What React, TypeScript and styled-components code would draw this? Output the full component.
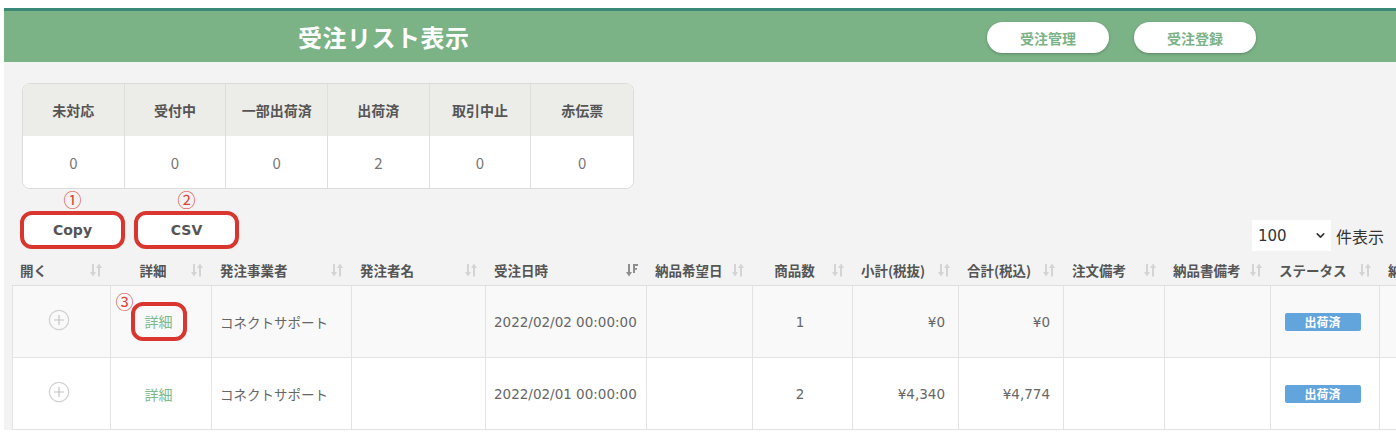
import React from "react";
import styled, { createGlobalStyle } from "styled-components";
import { ChevronDown } from "lucide-react";

const JP = `"Noto Sans CJK JP", sans-serif`;
const MIX = `"DejaVu Sans", "Noto Sans CJK JP", sans-serif`;

const GlobalStyle = createGlobalStyle`
  html, body { margin: 0; padding: 0; background: #fff; }
  body { font-family: ${MIX}; }
  * { box-sizing: border-box; }
`;

const Page = styled.div`
  margin: 8px 0 0 4px;
  height: 422px;
  background: #f2f3f2;
  overflow: hidden;
`;

const TopBar = styled.header`
  height: 54px;
  border-top: 3px solid #3d8979;
  background: #7bb387;
  display: flex;
  align-items: center;
  padding: 0 140px 0 294px;
`;

const Title = styled.h1`
  margin: 0;
  font-family: ${JP};
  font-weight: 700;
  font-size: 24px;
  line-height: 1;
  color: #fff;
  letter-spacing: 0.5px;
`;

const NavButtons = styled.nav`
  margin-left: auto;
  display: flex;
  gap: 25px;
  padding-top: 2px;
`;

const NavButton = styled.button`
  width: 122px;
  height: 31px;
  border: none;
  border-radius: 16px;
  background: #fff;
  color: #7bb387;
  font-family: ${JP};
  font-weight: 700;
  font-size: 14px;
  box-shadow: 0 1px 3px rgba(0, 0, 0, 0.25);
`;

const Main = styled.main`
  padding: 21px 0 0 8px;
`;

const SummaryCard = styled.div`
  margin-left: 10px;
  width: 612px;
  border: 1px solid #dcdcda;
  border-radius: 8px;
  overflow: hidden;
  background: #fff;
  display: grid;
  grid-template-columns: repeat(6, 1fr);
`;

const SummaryCell = styled.div<{ $head?: boolean; $last?: boolean }>`
  height: 52px;
  display: flex;
  align-items: center;
  justify-content: center;
  font-family: ${JP};
  border-right: ${(p) => (p.$last ? "none" : "1px solid #dedfdc")};
  background: ${(p) => (p.$head ? "#ecede9" : "#fff")};
  color: ${(p) => (p.$head ? "#555" : "#777")};
  font-weight: ${(p) => (p.$head ? 700 : 400)};
  font-size: ${(p) => (p.$head ? "14px" : "15px")};
`;

const Toolbar = styled.div`
  height: 66px;
  display: flex;
  justify-content: space-between;
  align-items: flex-end;
  padding: 2px 12px 6px 8px;
`;

const ExportGroup = styled.div`
  display: flex;
  gap: 9px;
`;

const ExportItem = styled.div`
  display: flex;
  flex-direction: column;
  align-items: center;
  gap: 4px;
`;

const Marker = styled.span`
  font-family: ${JP};
  font-size: 18px;
  line-height: 16px;
  height: 16px;
  color: #e0403a;
`;

const ExportButton = styled.button`
  width: 105px;
  height: 38px;
  border: 4px solid #d8362e;
  border-radius: 12px;
  background: #fff;
  color: #555;
  font-family: ${MIX};
  font-weight: 700;
  font-size: 14px;
`;

const LengthControl = styled.div`
  display: flex;
  align-items: center;
  gap: 5px;
  margin-bottom: -2px;
`;

const SelectBox = styled.div`
  width: 79px;
  height: 31px;
  background: #fff;
  display: flex;
  align-items: center;
  justify-content: space-between;
  padding: 0 4px 0 6px;
  font-family: ${MIX};
  font-size: 15px;
  color: #333;
`;

const LengthLabel = styled.span`
  font-family: ${JP};
  font-size: 16px;
  color: #333;
`;

const TableWrap = styled.div`
  overflow: hidden;
`;

const Table = styled.table`
  table-layout: fixed;
  border-collapse: separate;
  border-spacing: 0;
  width: 1489px;
`;

const Th = styled.th`
  height: 31px;
  padding: 0 9px 0 8px;
  border-bottom: 1px solid #dedede;
  font-family: ${JP};
  font-weight: 700;
  font-size: 13.5px;
  color: #555;
  text-align: left;
  white-space: nowrap;
  overflow: hidden;
`;

const HeadInner = styled.div<{ $align?: string }>`
  display: flex;
  align-items: center;
  gap: 4px;
  & > span {
    flex: 1;
    text-align: ${(p) => p.$align || "left"};
    overflow: hidden;
  }
  & > svg {
    flex: none;
  }
`;

const Row = styled.tr<{ $striped?: boolean }>`
  background: ${(p) => (p.$striped ? "#f9f9f9" : "#fff")};
`;

const Td = styled.td<{ $align?: string; $first?: boolean }>`
  height: 72px;
  padding: 0 13px 0 8px;
  border-right: 1px solid #e3e3e3;
  border-bottom: 1px solid #e3e3e3;
  border-left: ${(p) => (p.$first ? "1px solid #e3e3e3" : "none")};
  text-align: ${(p) => p.$align || "left"};
  vertical-align: middle;
  font-family: ${MIX};
  font-size: 13.5px;
  color: #666;
  white-space: nowrap;
`;

const DetailLink = styled.span`
  font-family: ${JP};
  font-size: 14px;
  color: #7cb88a;
`;

const Highlight = styled.span`
  position: relative;
  display: inline-block;
  padding: 6px 10px;
  border: 4px solid #d8362e;
  border-radius: 12px;
  line-height: 18px;
`;

const HighlightMarker = styled(Marker)`
  position: absolute;
  left: -19px;
  top: -13px;
`;

const Badge = styled.span`
  display: inline-block;
  width: 76px;
  height: 18px;
  line-height: 18px;
  border-radius: 2px;
  background: #62a4dc;
  color: #fff;
  font-family: ${JP};
  font-weight: 700;
  font-size: 12px;
  text-align: center;
`;

const SortIcon = ({ active }: { active?: boolean }) =>
  active ? (
    <svg width="12" height="14" viewBox="0 0 12 14">
      <path d="M3 1 V11" stroke="#8e8e8e" strokeWidth="2" />
      <polygon points="0,9 3,13.5 6,9" fill="#8e8e8e" />
      <rect x="7" y="1" width="5" height="2" fill="#8e8e8e" />
      <rect x="7" y="1" width="2" height="9" fill="#8e8e8e" />
      <rect x="7" y="5" width="4" height="1.8" fill="#8e8e8e" />
    </svg>
  ) : (
    <svg width="12" height="14" viewBox="0 0 12 14">
      <path d="M3 1 V11" stroke="#d4d4d4" strokeWidth="2" />
      <polygon points="0,9 3,13.5 6,9" fill="#d4d4d4" />
      <path d="M9 3 V13.5" stroke="#d4d4d4" strokeWidth="2" />
      <polygon points="6,5 9,0.5 12,5" fill="#d4d4d4" />
    </svg>
  );

const PlusIcon = () => (
  <svg width="22" height="22" viewBox="0 0 22 22">
    <circle cx="11" cy="11" r="9.7" fill="none" stroke="#d2d2d2" strokeWidth="1.3" />
    <path d="M11 6 V16 M6 11 H16" stroke="#c4c4c4" strokeWidth="1.2" />
  </svg>
);

const summary = [
  ["未対応", "0"],
  ["受付中", "0"],
  ["一部出荷済", "0"],
  ["出荷済", "2"],
  ["取引中止", "0"],
  ["赤伝票", "0"],
];

type Col = { label: string; width: number; align?: string; active?: boolean };
const columns: Col[] = [
  { label: "開く", width: 99 },
  { label: "詳細", width: 101, align: "center" },
  { label: "発注事業者", width: 140 },
  { label: "発注者名", width: 134 },
  { label: "受注日時", width: 161, active: true },
  { label: "納品希望日", width: 106 },
  { label: "商品数", width: 100, align: "center" },
  { label: "小計(税抜)", width: 106 },
  { label: "合計(税込)", width: 105 },
  { label: "注文備考", width: 101 },
  { label: "納品書備考", width: 106 },
  { label: "ステータス", width: 109 },
  { label: "納品書発行", width: 121 },
];

const rows = [
  { date: "2022/02/02 00:00:00", count: "1", sub: "¥0", total: "¥0" },
  { date: "2022/02/01 00:00:00", count: "2", sub: "¥4,340", total: "¥4,774" },
];

export default function App() {
  return (
    <>
      <GlobalStyle />
      <Page>
        <TopBar>
          <Title>受注リスト表示</Title>
          <NavButtons>
            <NavButton>受注管理</NavButton>
            <NavButton>受注登録</NavButton>
          </NavButtons>
        </TopBar>
        <Main>
          <SummaryCard>
            {summary.map(([l], i) => (
              <SummaryCell key={"h" + i} $head $last={i === 5}>
                {l}
              </SummaryCell>
            ))}
            {summary.map(([, v], i) => (
              <SummaryCell key={"v" + i} $last={i === 5}>
                {v}
              </SummaryCell>
            ))}
          </SummaryCard>
          <Toolbar>
            <ExportGroup>
              <ExportItem>
                <Marker>①</Marker>
                <ExportButton>Copy</ExportButton>
              </ExportItem>
              <ExportItem>
                <Marker>②</Marker>
                <ExportButton>CSV</ExportButton>
              </ExportItem>
            </ExportGroup>
            <LengthControl>
              <SelectBox>
                <span>100</span>
                <ChevronDown size={13} strokeWidth={3} color="#333" />
              </SelectBox>
              <LengthLabel>件表示</LengthLabel>
            </LengthControl>
          </Toolbar>
          <TableWrap>
            <Table>
              <colgroup>
                {columns.map((c) => (
                  <col key={c.label} style={{ width: c.width }} />
                ))}
              </colgroup>
              <thead>
                <tr>
                  {columns.map((c) => (
                    <Th key={c.label}>
                      <HeadInner $align={c.align}>
                        <span>{c.label}</span>
                        <SortIcon active={c.active} />
                      </HeadInner>
                    </Th>
                  ))}
                </tr>
              </thead>
              <tbody>
                {rows.map((r, i) => (
                  <Row key={r.date} $striped={i === 0}>
                    <Td $first $align="center">
                      <PlusIcon />
                    </Td>
                    <Td $align="center">
                      {i === 0 ? (
                        <Highlight>
                          <HighlightMarker>③</HighlightMarker>
                          <DetailLink>詳細</DetailLink>
                        </Highlight>
                      ) : (
                        <DetailLink>詳細</DetailLink>
                      )}
                    </Td>
                    <Td>コネクトサポート</Td>
                    <Td />
                    <Td>{r.date}</Td>
                    <Td />
                    <Td $align="center">{r.count}</Td>
                    <Td $align="right">{r.sub}</Td>
                    <Td $align="right">{r.total}</Td>
                    <Td />
                    <Td />
                    <Td $align="center">
                      <Badge>出荷済</Badge>
                    </Td>
                    <Td />
                  </Row>
                ))}
              </tbody>
            </Table>
          </TableWrap>
        </Main>
      </Page>
    </>
  );
}
